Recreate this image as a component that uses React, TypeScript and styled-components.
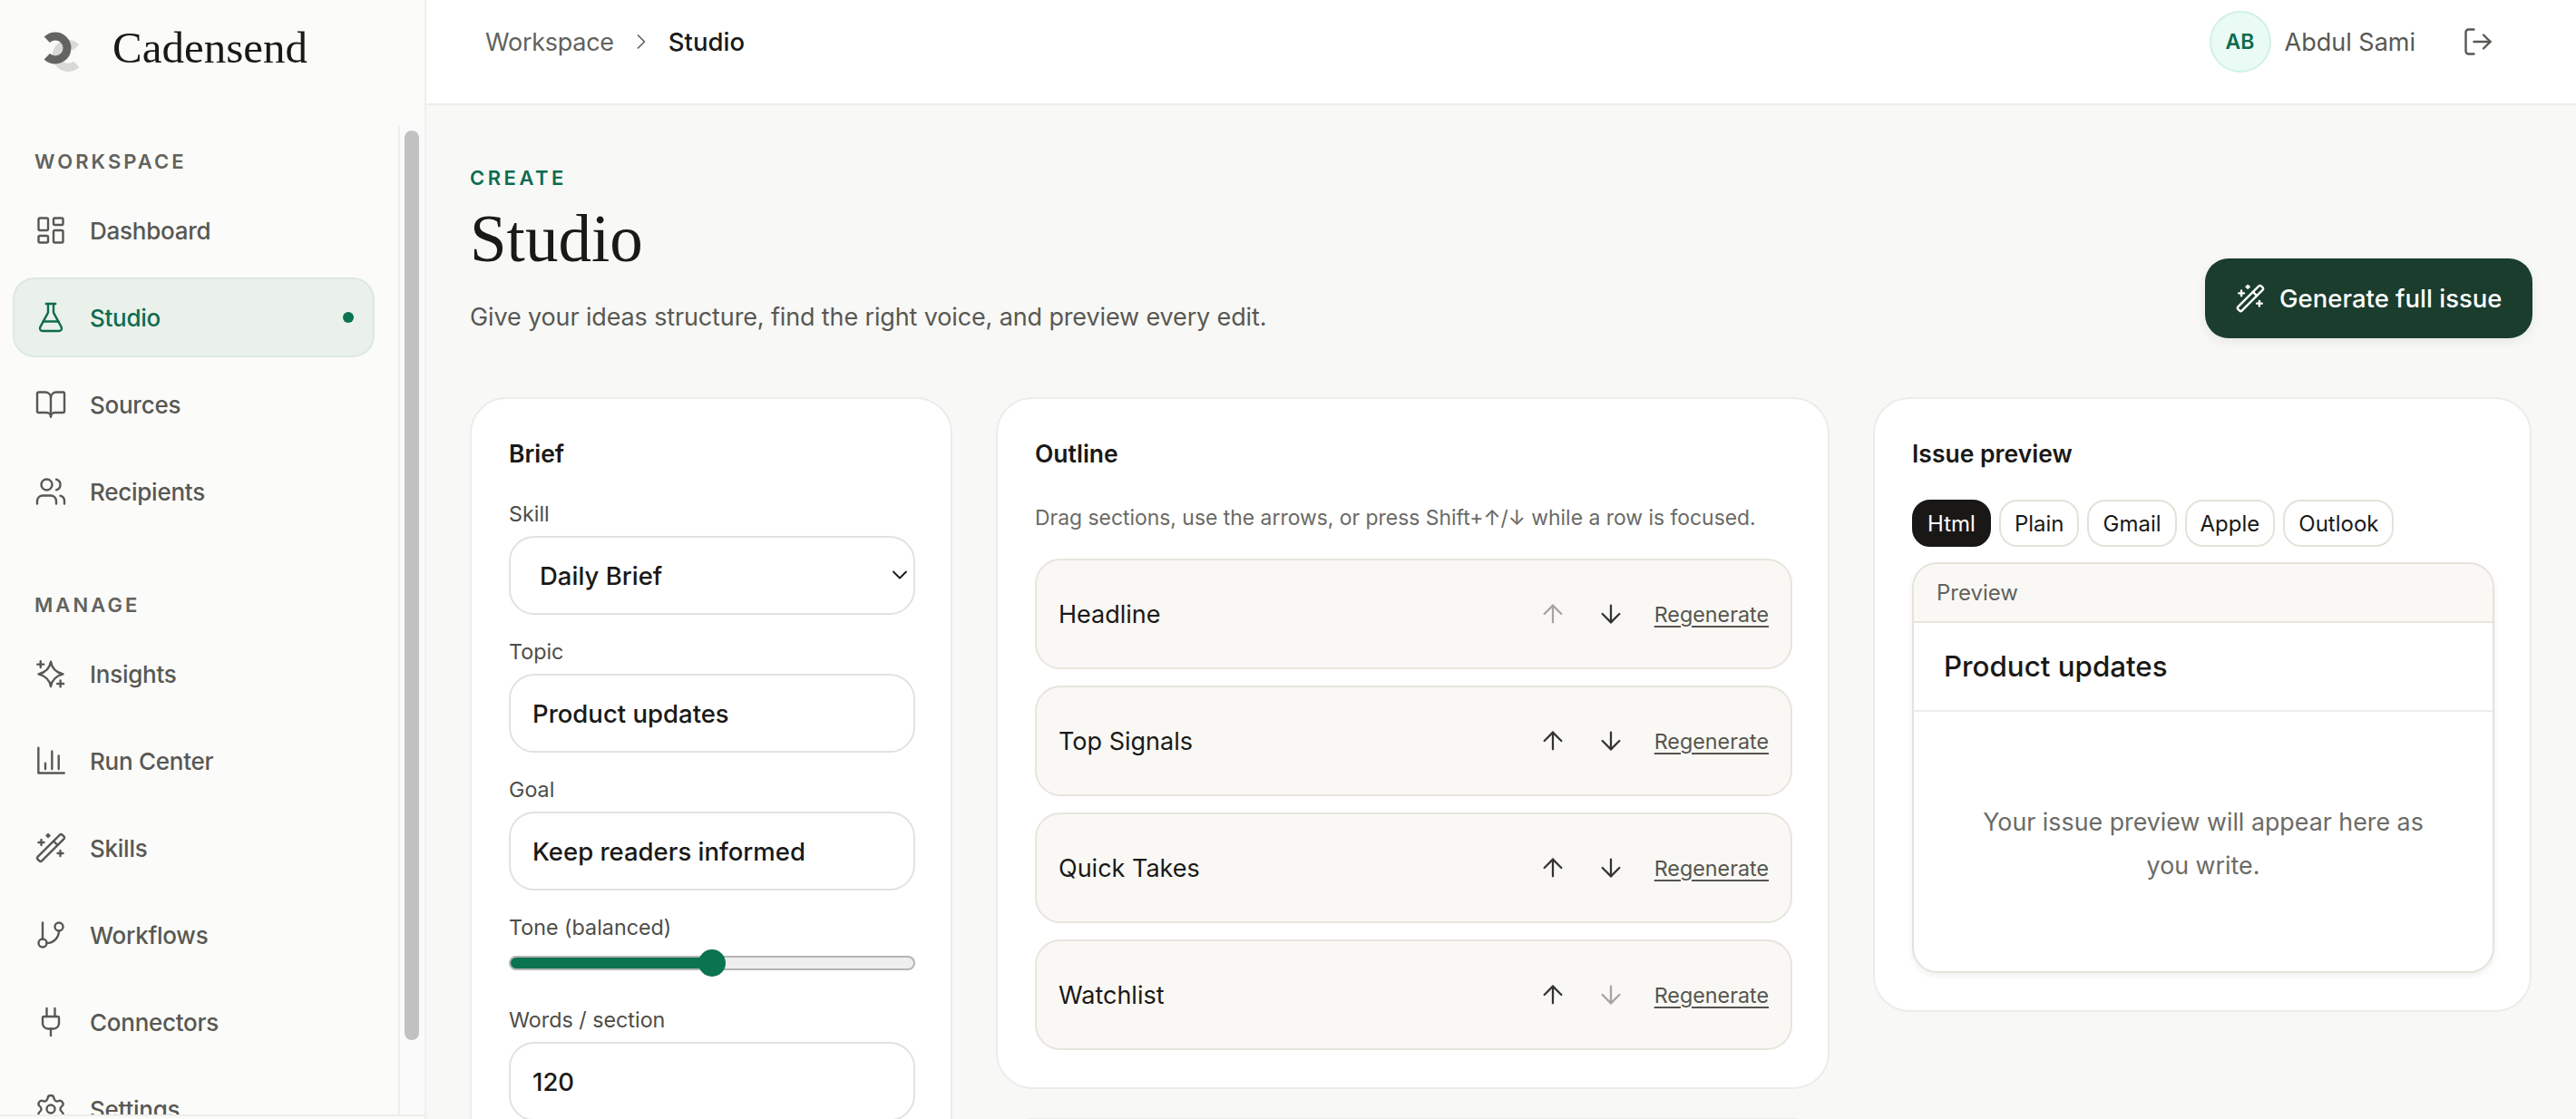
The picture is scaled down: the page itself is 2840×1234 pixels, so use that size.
import React from 'react';
import styled, { createGlobalStyle } from 'styled-components';
import {
  ArrowDown, ArrowUp, BookOpen, ChevronDown, ChevronRight, FlaskConical, GitBranch,
  LayoutDashboard, LogOut, Plug, Settings, Users, WandSparkles,
} from 'lucide-react';

const UI = `Inter, "Liberation Sans", sans-serif`;
const SERIF = `"Liberation Serif", serif`;

const Global = createGlobalStyle`
  html, body { margin: 0; height: 100%; overflow: hidden; background: #f8f8f6; }
  #root { height: 100%; }
  * { box-sizing: border-box; }
`;

const Shell = styled.div`
  display: flex;
  height: 1234px;
  font-family: ${UI};
  color: #1a1917;
`;

const Sidebar = styled.aside`
  width: 470px;
  flex: none;
  display: flex;
  flex-direction: column;
  background: #fbfbf9;
  border-right: 2px solid #efefec;
`;

const Brand = styled.div`
  height: 138px;
  flex: none;
  display: flex;
  align-items: flex-start;
  gap: 28px;
  padding: 22px 0 0 36px;
`;

const BrandName = styled.span`
  font: 400 49px/60px ${SERIF};
  color: #1a1917;
  margin-top: 1px;
`;

const SideBody = styled.div`
  flex: 1;
  min-height: 0;
  display: flex;
`;

const NavScroll = styled.nav`
  flex: 1;
  min-width: 0;
  overflow: hidden;
  padding: 22px 26px 0 14px;
`;

const ScrollRail = styled.div`
  width: 29px;
  flex: none;
  padding: 6px 0 0 5px;
  background: #fafafa;
  border-left: 2px solid #eeeeeb;
`;

const ScrollThumb = styled.div`
  width: 16px;
  height: 1003px;
  border-radius: 8px;
  background: #c1c1c1;
`;

const NavSection = styled.section`
  margin-bottom: 63px;
  &:last-child { margin-bottom: 0; }
`;

const SectionLabel = styled.div`
  font-size: 22px;
  line-height: 36px;
  font-weight: 600;
  letter-spacing: 0.14em;
  color: #62625d;
  padding-left: 24px;
  margin-bottom: 14px;
`;

const NavList = styled.div`
  display: flex;
  flex-direction: column;
  gap: 8px;
`;

const NavRow = styled.a<{ $active?: boolean }>`
  height: 88px;
  display: flex;
  align-items: center;
  gap: 25px;
  padding: 0 21px 0 22px;
  border-radius: 24px;
  border: 2px solid ${(p) => (p.$active ? '#dde9e1' : 'transparent')};
  background: ${(p) => (p.$active ? '#e9f1ea' : 'transparent')};
  color: ${(p) => (p.$active ? '#0f6b4f' : '#585853')};
  font-size: 26px;
  letter-spacing: -0.01em;
  font-weight: 500;
  svg { flex: none; }
`;

const ActiveDot = styled.span`
  width: 12px;
  height: 12px;
  border-radius: 50%;
  background: #0a7350;
  margin-left: auto;
`;

const SideFoot = styled.div`
  flex: none;
  height: 5px;
  border-top: 2px solid #eeeeeb;
`;

const Column = styled.div`
  flex: 1;
  min-width: 0;
  display: flex;
  flex-direction: column;
`;

const TopBar = styled.header`
  height: 116px;
  flex: none;
  display: flex;
  align-items: flex-start;
  justify-content: space-between;
  background: #fff;
  border-bottom: 2px solid #ecece9;
  padding: 12px 90px 0 65px;
`;

const Crumbs = styled.div`
  height: 68px;
  display: flex;
  align-items: center;
  font-size: 27px;
  letter-spacing: -0.01em;
  color: #62625d;
`;

const CrumbSep = styled.span`
  display: flex;
  margin: 0 16px;
  color: #62625d;
`;

const CrumbNow = styled.span`
  color: #1a1917;
  font-size: 27.5px;
  letter-spacing: 0;
  font-weight: 500;
`;

const UserBox = styled.div`
  display: flex;
  align-items: center;
  height: 68px;
`;

const Avatar = styled.div`
  width: 68px;
  height: 68px;
  border-radius: 50%;
  background: #e9fbf4;
  border: 2px solid #d0f2e5;
  display: flex;
  align-items: center;
  justify-content: center;
  font-size: 23px;
  font-weight: 600;
  color: #0f6b4f;
`;

const UserName = styled.span`
  font-size: 27px;
  color: #585853;
  margin: 0 51px 0 15px;
`;

const Main = styled.main`
  flex: 1;
  min-height: 0;
  overflow: hidden;
  padding: 65px 48px 0;
  background: #f8f8f6;
`;

const Head = styled.div`
  display: flex;
  justify-content: space-between;
  align-items: flex-end;
  margin-bottom: 65px;
`;

const Eyebrow = styled.div`
  font-size: 22px;
  line-height: 30px;
  font-weight: 600;
  letter-spacing: 0.16em;
  color: #0f6b4f;
`;

const Title = styled.h1`
  font: 400 73px/87px ${SERIF};
  margin: 9px 0 23px;
  color: #1a1917;
`;

const Subtitle = styled.p`
  margin: 0 0 3px;
  font-size: 27px;
  letter-spacing: -0.005em;
  line-height: 40px;
  color: #585853;
`;

const GenerateButton = styled.button`
  width: 361px;
  height: 88px;
  display: flex;
  align-items: center;
  gap: 15px;
  padding: 0 0 0 33px;
  border: 0;
  border-radius: 26px;
  background: #1a3d2e;
  color: #fff;
  font: 500 27.5px ${UI};
  box-shadow: 0 4px 12px rgba(26, 61, 46, 0.08);
`;

const Cards = styled.div`
  display: grid;
  grid-template-columns: 532px 919px 726px;
  gap: 48px;
  align-items: start;
`;

const Stack = styled.div`
  display: flex;
  flex-direction: column;
  gap: 32px;
`;

const Card = styled.section`
  background: #fff;
  border: 2px solid #ececea;
  border-radius: 40px;
  padding: 41px 39px 41px 41px;
`;

const NextCard = styled(Card)`
  height: 200px;
`;

const CardTitle = styled.h2`
  margin: 0;
  font-size: 26.5px;
  line-height: 38px;
  font-weight: 600;
  color: #1a1917;
`;

const FieldStack = styled.div`
  display: flex;
  flex-direction: column;
  gap: 23px;
  margin-top: 30px;
`;

const Field = styled.label`
  display: block;
`;

const FieldLabel = styled.span`
  display: block;
  font-size: 23.3px;
  line-height: 36px;
  color: #4d4d48;
  margin-bottom: 6px;
`;

const SelectWrap = styled.div`
  position: relative;
  color: #1a1917;
  svg { position: absolute; right: 3px; top: 29px; pointer-events: none; }
`;

const Select = styled.select`
  width: 100%;
  height: 87px;
  appearance: none;
  border: 2px solid #e2e2df;
  border-radius: 28px;
  background: #fff;
  padding: 0 32px;
  font: 500 27.5px ${UI};
  color: #1a1917;
`;

const Input = styled.input`
  width: 100%;
  height: 87px;
  border: 2px solid #e2e2df;
  border-radius: 28px;
  background: #fff;
  padding: 0 24px;
  font: 500 27.5px ${UI};
  color: #1a1917;
`;

const Range = styled.input`
  -webkit-appearance: none;
  appearance: none;
  display: block;
  width: 100%;
  height: 30px;
  margin: 1px 0 7px;
  background: transparent;
  &::-webkit-slider-runnable-track {
    height: 16px;
    border-radius: 8px;
    border: 2px solid #b4b4b1;
    background: linear-gradient(to right, #0a7350 50%, #efefef 50%);
  }
  &::-webkit-slider-thumb {
    -webkit-appearance: none;
    width: 30px;
    height: 30px;
    margin-top: -9px;
    border-radius: 50%;
    background: #0a7350;
  }
`;

const Hint = styled.p`
  margin: 34px 0 27px;
  font-size: 22.9px;
  line-height: 36px;
  color: #6a6a65;
`;

const Rows = styled.div`
  display: flex;
  flex-direction: column;
  gap: 18px;
`;

const Row = styled.div`
  height: 122px;
  display: flex;
  align-items: center;
  padding: 0 24px;
  border: 2px solid #e8e5dd;
  border-radius: 28px;
  background: #f9f8f4;
`;

const RowName = styled.span`
  flex: 1;
  font-size: 27px;
  color: #1a1917;
`;

const ArrowBtn = styled.button<{ $off?: boolean }>`
  width: 64px;
  height: 64px;
  padding: 0;
  border: 0;
  background: none;
  display: flex;
  align-items: center;
  justify-content: center;
  color: #33332f;
  opacity: ${(p) => (p.$off ? 0.42 : 1)};
`;

const Regen = styled.a`
  margin-left: 16px;
  font-size: 23.3px;
  color: #55554f;
  text-decoration: underline;
  text-underline-offset: 4px;
`;

const TabBar = styled.div`
  display: flex;
  gap: 9px;
  margin: 32px 0 17px;
`;

const Tab = styled.button<{ $on?: boolean }>`
  height: 52px;
  padding: 0 15px;
  border-radius: 20px;
  border: 2px solid ${(p) => (p.$on ? '#1a1816' : '#e6e2d9')};
  background: ${(p) => (p.$on ? '#1a1816' : '#fff')};
  color: ${(p) => (p.$on ? '#fff' : '#1a1917')};
  font: 400 24px ${UI};
`;

const PreviewBox = styled.div`
  height: 453px;
  display: flex;
  flex-direction: column;
  border: 2px solid #e6e2d9;
  border-radius: 28px;
  overflow: hidden;
  box-shadow: 0 3px 6px rgba(30, 30, 20, 0.07);
`;

const PreviewBar = styled.div`
  height: 65px;
  flex: none;
  display: flex;
  align-items: center;
  padding-left: 25px;
  background: #f9f8f4;
  border-bottom: 2px solid #e8e5dd;
  font-size: 24px;
  color: #62625d;
`;

const PreviewSubject = styled.div`
  height: 98px;
  flex: none;
  display: flex;
  align-items: center;
  padding-left: 33px;
  border-bottom: 2px solid #ececea;
  font-size: 31.3px;
  font-weight: 500;
`;

const PreviewBody = styled.div`
  flex: 1;
  display: flex;
  align-items: center;
  justify-content: center;
  padding: 3px 60px 0;
  text-align: center;
  font-size: 26.8px;
  line-height: 48px;
  color: #6b6b66;
`;

const Logo = () => (
  <svg width="60" height="60" viewBox="36 22 60 60" fill="none" aria-hidden="true">
    <path d="M84.2 52.3 A13 13 0 1 0 84.2 70.7" stroke="#d9d9d7" strokeWidth="9" />
    <path d="M51.8 43.8 A13 13 0 1 1 51.8 62.2" stroke="#5e5e5c" strokeWidth="9" opacity="0.96" />
  </svg>
);

const SparkleIcon = () => (
  <svg width="36" height="36" viewBox="0 0 24 24" fill="none" stroke="currentColor" strokeWidth="1.6" strokeLinecap="round" strokeLinejoin="round" aria-hidden="true">
    <path d="M12 3.2C12.8 8 15.6 11 21 12.3 15.6 13.6 12.9 16.4 12 21.4 11.1 16.4 8.4 13.6 3 12.3 8.4 11 11.2 8 12 3.2Z" />
    <path d="M4.5 2.8v4.6M2.2 5.1h4.6M19.1 17v4.6M16.8 19.3h4.6" />
  </svg>
);

const RunIcon = () => (
  <svg width="36" height="36" viewBox="0 0 24 24" fill="none" stroke="currentColor" strokeWidth="1.6" strokeLinecap="round" strokeLinejoin="round" aria-hidden="true">
    <path d="M2.9 2.4V21h18.9M8 13.8V18M12.9 5V18M17.8 8.3V18" />
  </svg>
);

const ic = { size: 36, strokeWidth: 1.6 };

const workspace = [
  { label: 'Dashboard', icon: <LayoutDashboard {...ic} /> },
  { label: 'Studio', icon: <FlaskConical {...ic} />, active: true },
  { label: 'Sources', icon: <BookOpen {...ic} /> },
  { label: 'Recipients', icon: <Users {...ic} /> },
];

const manage = [
  { label: 'Insights', icon: <SparkleIcon /> },
  { label: 'Run Center', icon: <RunIcon /> },
  { label: 'Skills', icon: <WandSparkles {...ic} /> },
  { label: 'Workflows', icon: <GitBranch {...ic} /> },
  { label: 'Connectors', icon: <Plug {...ic} /> },
  { label: 'Settings', icon: <Settings {...ic} /> },
];

const outline = ['Headline', 'Top Signals', 'Quick Takes', 'Watchlist'];
const tabs = ['Html', 'Plain', 'Gmail', 'Apple', 'Outlook'];

export default function App() {
  return (
    <Shell>
      <Global />
      <Sidebar>
        <Brand>
          <Logo />
          <BrandName>Cadensend</BrandName>
        </Brand>
        <SideBody>
          <NavScroll>
            <NavSection>
              <SectionLabel>WORKSPACE</SectionLabel>
              <NavList>
                {workspace.map((n) => (
                  <NavRow key={n.label} $active={n.active}>
                    {n.icon}
                    {n.label}
                    {n.active && <ActiveDot />}
                  </NavRow>
                ))}
              </NavList>
            </NavSection>
            <NavSection>
              <SectionLabel>MANAGE</SectionLabel>
              <NavList>
                {manage.map((n) => (
                  <NavRow key={n.label}>
                    {n.icon}
                    {n.label}
                  </NavRow>
                ))}
              </NavList>
            </NavSection>
          </NavScroll>
          <ScrollRail>
            <ScrollThumb />
          </ScrollRail>
        </SideBody>
        <SideFoot />
      </Sidebar>
      <Column>
        <TopBar>
          <Crumbs>
            Workspace
            <CrumbSep><ChevronRight size={28} strokeWidth={1.5} /></CrumbSep>
            <CrumbNow>Studio</CrumbNow>
          </Crumbs>
          <UserBox>
            <Avatar>AB</Avatar>
            <UserName>Abdul Sami</UserName>
            <LogOut size={36} strokeWidth={1.6} color="#585853" />
          </UserBox>
        </TopBar>
        <Main>
          <Head>
            <div>
              <Eyebrow>CREATE</Eyebrow>
              <Title>Studio</Title>
              <Subtitle>Give your ideas structure, find the right voice, and preview every edit.</Subtitle>
            </div>
            <GenerateButton>
              <WandSparkles size={34} strokeWidth={1.7} />
              Generate full issue
            </GenerateButton>
          </Head>
          <Cards>
            <Card>
              <CardTitle>Brief</CardTitle>
              <FieldStack>
                <Field>
                  <FieldLabel>Skill</FieldLabel>
                  <SelectWrap>
                    <Select defaultValue="Daily Brief">
                      <option>Daily Brief</option>
                    </Select>
                    <ChevronDown size={28} strokeWidth={1.6} />
                  </SelectWrap>
                </Field>
                <Field>
                  <FieldLabel>Topic</FieldLabel>
                  <Input defaultValue="Product updates" />
                </Field>
                <Field>
                  <FieldLabel>Goal</FieldLabel>
                  <Input defaultValue="Keep readers informed" />
                </Field>
                <Field>
                  <FieldLabel>Tone (balanced)</FieldLabel>
                  <Range type="range" min={0} max={100} defaultValue={50} />
                </Field>
                <Field>
                  <FieldLabel>Words / section</FieldLabel>
                  <Input defaultValue="120" />
                </Field>
              </FieldStack>
            </Card>
            <Stack>
              <Card>
                <CardTitle>Outline</CardTitle>
                <Hint>Drag sections, use the arrows, or press Shift+↑/↓ while a row is focused.</Hint>
                <Rows>
                  {outline.map((name, i) => (
                    <Row key={name}>
                      <RowName>{name}</RowName>
                      <ArrowBtn $off={i === 0}><ArrowUp size={32} strokeWidth={1.7} /></ArrowBtn>
                      <ArrowBtn $off={i === outline.length - 1}><ArrowDown size={32} strokeWidth={1.7} /></ArrowBtn>
                      <Regen>Regenerate</Regen>
                    </Row>
                  ))}
                </Rows>
              </Card>
              <NextCard />
            </Stack>
            <Card>
              <CardTitle>Issue preview</CardTitle>
              <TabBar>
                {tabs.map((t, i) => (
                  <Tab key={t} $on={i === 0}>{t}</Tab>
                ))}
              </TabBar>
              <PreviewBox>
                <PreviewBar>Preview</PreviewBar>
                <PreviewSubject>Product updates</PreviewSubject>
                <PreviewBody>Your issue preview will appear here as you write.</PreviewBody>
              </PreviewBox>
            </Card>
          </Cards>
        </Main>
      </Column>
    </Shell>
  );
}
